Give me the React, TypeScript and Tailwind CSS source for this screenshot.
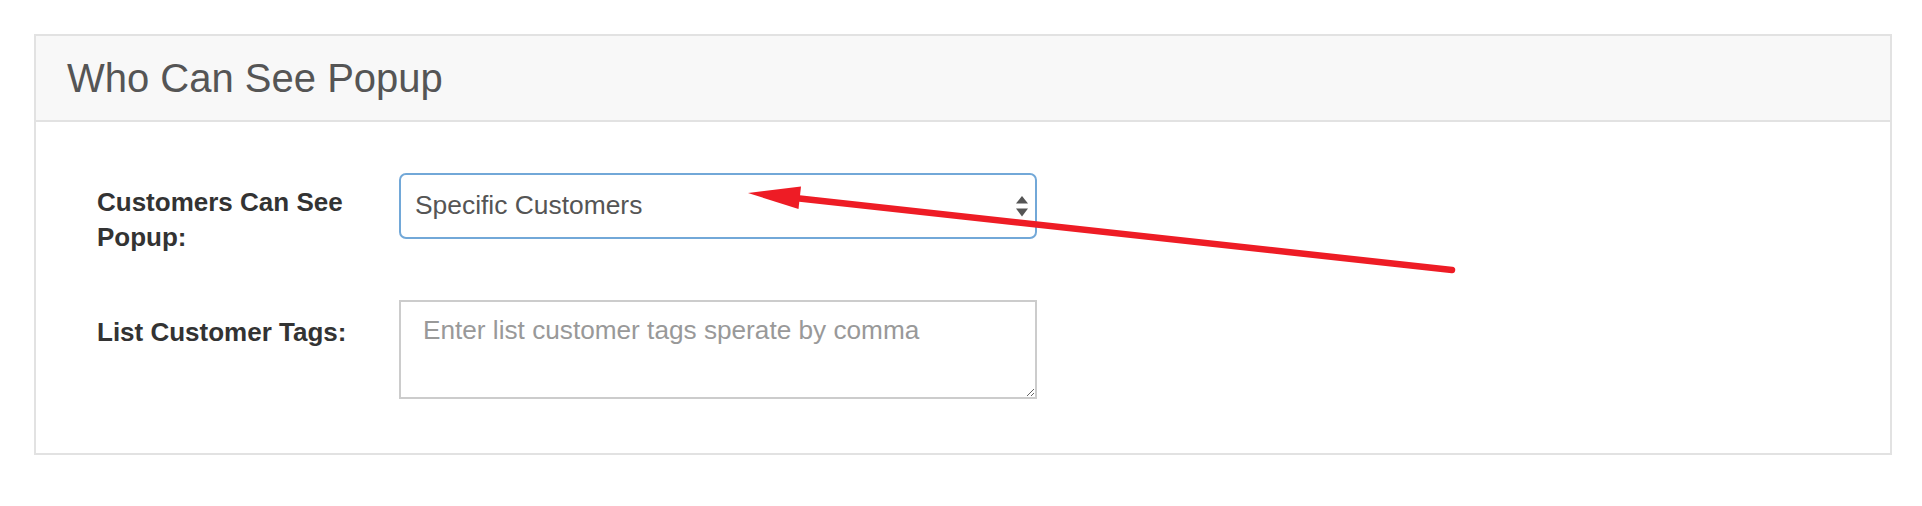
import React from "react";

export default function App() {
  return (
    <div
      className="relative min-h-[506px] w-[1922px] bg-white"
      style={{ fontFamily: '"Liberation Sans", Arial, Helvetica, sans-serif' }}
    >
      <div className="pt-[34px] pl-[34px] pr-[30px]">
        <div className="border-2 border-[#e2e2e2] bg-white">
          <div className="border-b-2 border-[#e2e2e2] bg-[#f8f8f8] py-[19px] pl-[31px]">
            <h3 className="text-[40px] leading-[46px] font-normal text-[#555555]">
              Who Can See Popup
            </h3>
          </div>
          <div className="flex flex-col gap-[45px] pt-[51px] pb-[54px] pl-[61px]">
            <div className="flex items-start">
              <label className="w-[302px] pr-[40px] pt-[12px] text-[26px] leading-[35px] font-bold text-[#333333]">
                Customers Can See Popup:
              </label>
              <div className="flex h-[66px] w-[638px] items-center justify-between rounded-[7px] border-2 border-[#72a8d8] pl-[14px] pr-[7px] text-[26.4px] text-[#555555]">
                <span>Specific Customers</span>
                <svg width="12" height="21" viewBox="0 0 12 21">
                  <polygon points="6,0 12,7.5 0,7.5" fill="#555555" />
                  <polygon points="0,12.5 12,12.5 6,20.5" fill="#555555" />
                </svg>
              </div>
            </div>
            <div className="flex items-start">
              <label className="w-[302px] pr-[40px] pt-[15px] text-[26px] leading-[35px] font-bold text-[#333333]">
                List Customer Tags:
              </label>
              <textarea
                className="block h-[99px] w-[638px] resize-y border-2 border-[#cccccc] px-[22px] pt-[11px] text-[26.2px] leading-[35px] text-[#555555] outline-none placeholder:text-[#999999]"
                placeholder="Enter list customer tags sperate by comma"
              />
            </div>
          </div>
        </div>
      </div>
      <svg
        className="pointer-events-none absolute left-0 top-0"
        width="1922"
        height="506"
        viewBox="0 0 1922 506"
      >
        <line
          x1="795"
          y1="198"
          x2="1452"
          y2="270"
          stroke="#ee1c25"
          strokeWidth="6.5"
          strokeLinecap="round"
        />
        <polygon points="748,193 801,186.5 798.5,209" fill="#ee1c25" />
      </svg>
    </div>
  );
}
